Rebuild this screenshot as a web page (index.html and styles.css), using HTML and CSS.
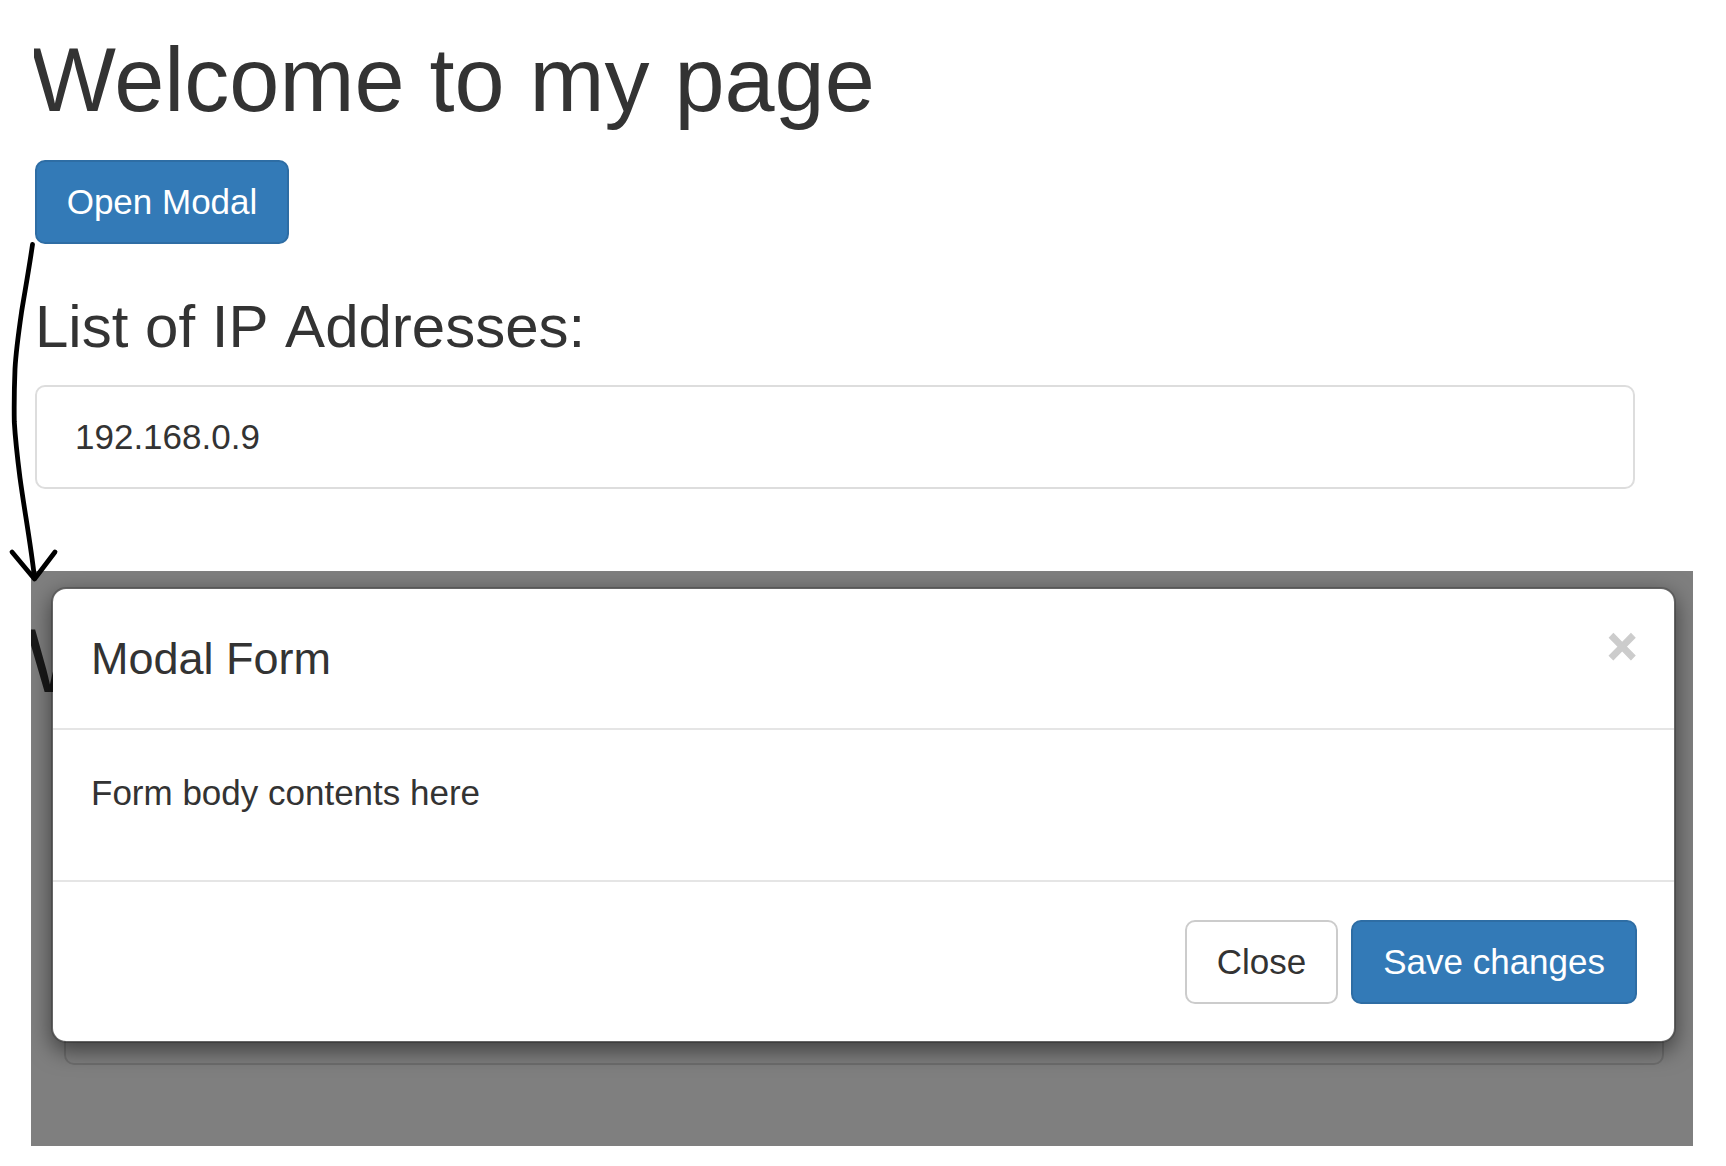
FILE: index.html
```html
<!DOCTYPE html>
<html lang="en">
<head>
<meta charset="utf-8">
<title>Welcome to my page</title>
<link rel="stylesheet" href="styles.css">
</head>
<body>
<main class="page">
  <h1 class="page-title">Welcome to my page</h1>
  <button class="btn btn-primary btn-open" type="button">Open Modal</button>
  <h3 class="list-title">List of IP Addresses:</h3>
  <ul class="list-group">
    <li class="list-item">192.168.0.9</li>
  </ul>
</main>

<section class="modal-view">
  <div class="covered-title" aria-hidden="true">W</div>
  <div class="covered-list" aria-hidden="true"></div>
  <div class="backdrop"></div>
  <div class="modal" role="dialog">
    <header class="modal-header">
      <h4 class="modal-title">Modal Form</h4>
      <button class="close" type="button">&times;</button>
    </header>
    <div class="modal-body">Form body contents here</div>
    <footer class="modal-footer">
      <button class="btn btn-default" type="button">Close</button>
      <button class="btn btn-primary" type="button">Save changes</button>
    </footer>
  </div>
</section>

<svg class="arrow" width="70" height="600" viewBox="0 0 70 600" aria-hidden="true">
  <path d="M32.500 244.500C29.500 266 25.500 288 21.700 311C18.500 333 16 350 15 369C14.300 386 14 404 14.300 422C15.500 442 17.700 460 20 478C24.500 511 31 546 34.500 578"/>
  <path d="M12 552L34.500 579L55 552"/>
</svg>
</body>
</html>
```

FILE: styles.css
```css
* {
  box-sizing: border-box;
}

body {
  position: relative;
  margin: 0;
  height: 1166px;
  overflow: hidden;
  background: #fff;
  color: #333;
  font: 35px/50px Arial, "Liberation Sans", sans-serif;
}

.page {
  height: 571px;
  padding: 31px 91px 0 35px;
}

.page-title {
  margin: 0 0 30px -4px;
  font-size: 90px;
  font-weight: 400;
  line-height: 99px;
  clip-path: inset(0 0 -10px 3px);
}

.list-title {
  margin: 50px 0 25px;
  font-size: 60px;
  font-weight: 400;
  line-height: 66px;
  font-kerning: none;
}

.list-group {
  margin: 0;
  padding: 0;
  list-style: none;
}

.list-item {
  padding: 25px 38px;
  border: 2px solid #ddd;
  border-radius: 10px;
}

.btn {
  display: block;
  padding: 15px 30px;
  border: 2px solid;
  border-radius: 10px;
  font: inherit;
  white-space: nowrap;
}

.btn-primary {
  border-color: #2e6da4;
  background: #337ab7;
  color: #fff;
}

.btn-open {
  width: 254px;
  padding: 15px 29px;
}

.btn-default {
  border-color: #ccc;
  background: #fff;
  color: #333;
}

.modal-view {
  position: relative;
  width: 1662px;
  height: 575px;
  margin-left: 31px;
  padding: 16px 17px 0 20px;
  overflow: hidden;
}

/* page content showing from under the backdrop */
.covered-title {
  position: absolute;
  top: 41px;
  left: -5px;
  font-size: 90px;
  line-height: 99px;
}

.covered-list {
  position: absolute;
  top: 390px;
  left: 33px;
  width: 1600px;
  height: 104px;
  border: 2px solid #ddd;
  border-radius: 10px;
}

.backdrop {
  position: absolute;
  inset: 0;
  background: rgba(0, 0, 0, .5);
}

.modal {
  position: relative;
  border: 2px solid rgba(0, 0, 0, .2);
  border-radius: 15px;
  background: #fff;
  background-clip: padding-box;
  box-shadow: 0 7.5px 22.5px rgba(0, 0, 0, .5);
}

.modal-header {
  display: flex;
  justify-content: space-between;
  align-items: flex-start;
  height: 141px;
  padding: 38px 37px 37px 38px;
  border-bottom: 2px solid #e5e5e5;
}

.modal-title {
  margin: 0;
  font-size: 45px;
  font-weight: 400;
  line-height: 64px;
}

.close {
  margin: -6px 0 0;
  padding: 0;
  border: 0;
  background: none;
  color: #ccc;
  font: 700 51px/52px Arial, "Liberation Sans", sans-serif;
  -webkit-text-stroke: 1.2px #ccc;
}

.modal-body {
  height: 150px;
  padding: 38px;
}

.modal-footer {
  display: flex;
  justify-content: flex-end;
  gap: 13px;
  padding: 38px 37px 37px;
  border-top: 2px solid #e5e5e5;
}

.arrow {
  position: absolute;
  top: 0;
  left: 0;
  fill: none;
  stroke: #000;
  stroke-width: 4.8;
  stroke-linecap: round;
  stroke-linejoin: round;
}
```
